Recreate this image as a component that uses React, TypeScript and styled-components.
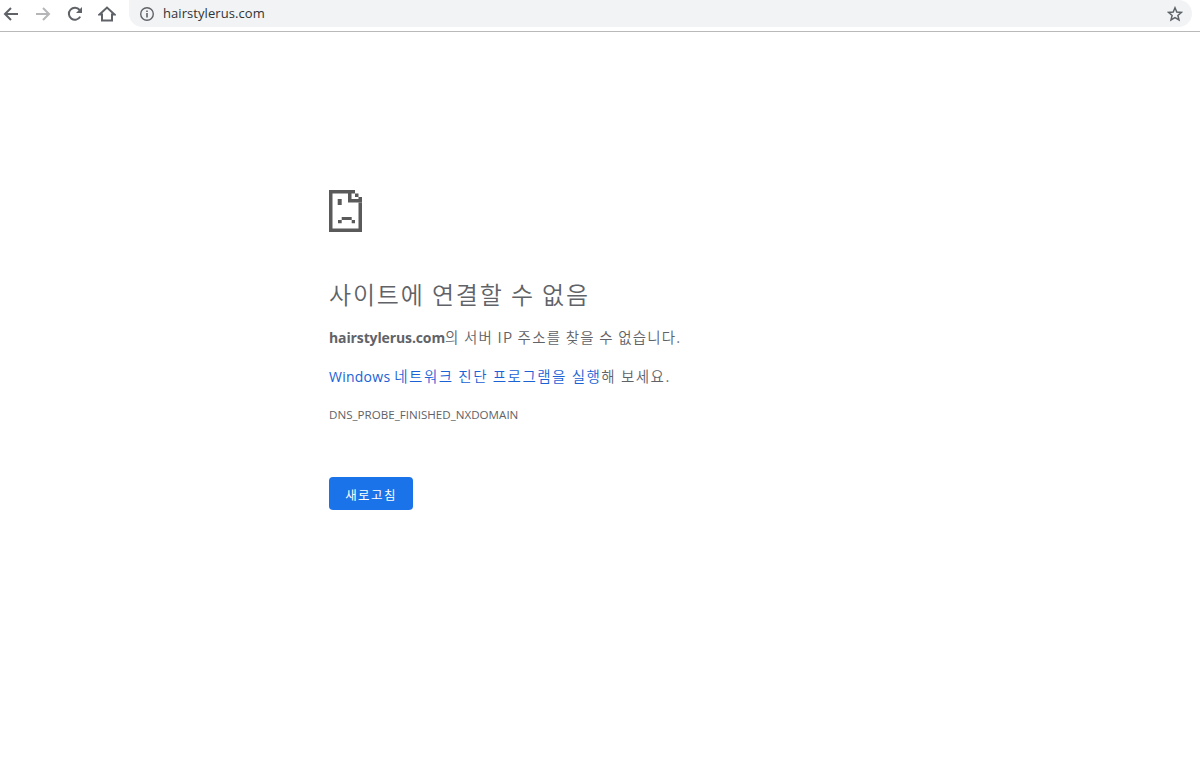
import React from "react";
import styled, { createGlobalStyle } from "styled-components";

const Global = createGlobalStyle`
  html, body { margin: 0; padding: 0; background: #fff; }
  body { font-family: "Open Sans", "Noto Sans CJK KR", sans-serif; }
`;

const Page = styled.div`
  width: 1200px;
  height: 773px;
  overflow: hidden;
  display: flex;
  flex-direction: column;
`;

const Toolbar = styled.header`
  height: 32px;
  flex: none;
  box-sizing: border-box;
  display: flex;
  align-items: flex-start;
  border-bottom: 1px solid #b9b9b9;
  padding-right: 8px;
`;

const NavButton = styled.button<{ $disabled?: boolean }>`
  flex: none;
  width: 32px;
  height: 27px;
  padding: 0;
  border: 0;
  background: none;
  color: ${(p) => (p.$disabled ? "#b4b6b8" : "#5f6368")};
  display: flex;
  align-items: center;
  justify-content: center;
  svg { display: block; }
`;

const NavGroup = styled.nav`
  flex: none;
  width: 129px;
  display: flex;
  margin-left: -5px;
  margin-right: 5px;
`;

const Omnibox = styled.div`
  flex: 1;
  height: 27px;
  background: #f1f3f4;
  border-radius: 0 14px 14px 14px;
  display: flex;
  align-items: center;
  padding: 0 9px 0 10px;
  color: #5f6368;
`;

const Url = styled.span`
  flex: 1;
  margin-left: 8px;
  font-size: 13px;
  letter-spacing: 0.07px;
  color: #303437;
  line-height: 27px;
`;

const Main = styled.main`
  flex: 1;
  padding: 158px 0 0 329px;
  color: #5f6368;
`;

const SadFile = styled.svg`
  display: block;
  width: 33px;
  height: 42px;
  margin-bottom: 44px;
`;

const Title = styled.h1`
  margin: 0 0 15px;
  font-size: 24px;
  font-weight: 350;
  letter-spacing: 1.85px;
  line-height: 36px;
  color: #5f6368;
  font-family: "Noto Sans CJK KR", sans-serif;
`;

const Message = styled.p`
  margin: 0 0 19px;
  height: 20px;
  font-size: 14px;
  line-height: 20px;
  color: #5f6368;
`;

const Strong = styled.strong`
  font-weight: 700;
  letter-spacing: -0.12px;
`;

const Hangul = styled.span<{ $tracking: number }>`
  font-family: "Noto Sans CJK KR", sans-serif;
  font-size: 14.5px;
  font-weight: 350;
  letter-spacing: ${(p) => p.$tracking}px;
`;

const HelpLink = styled.a`
  color: #1a62d6;
  text-decoration: none;
  letter-spacing: 0.25px;
`;

const ErrorCode = styled.div`
  font-size: 11.6px;
  line-height: 18px;
  color: #5f6368;
  margin-top: 20px;
`;

const Reload = styled.button`
  display: block;
  margin-top: 53px;
  width: 84px;
  height: 33px;
  padding: 1px 0 0;
  border: 0;
  border-radius: 4px;
  background: #1a73e8;
  color: #fff;
  font-family: "Noto Sans CJK KR", sans-serif;
  font-size: 12.5px;
  font-weight: 400;
  letter-spacing: 1.4px;
`;

export default function App() {
  return (
    <Page>
      <Global />
      <Toolbar>
        <NavGroup>
          <NavButton aria-label="back">
            <svg width="16" height="16" viewBox="0 0 16 16" fill="none" stroke="#5f6368" strokeWidth="2">
              <path d="M15 8H2M8 2 2 8l6 6" />
            </svg>
          </NavButton>
          <NavButton aria-label="forward" $disabled>
            <svg width="16" height="16" viewBox="0 0 16 16" fill="none" stroke="currentColor" strokeWidth="2">
              <path d="M1 8h13M8 2l6 6-6 6" />
            </svg>
          </NavButton>
          <NavButton aria-label="reload">
            <svg width="16" height="16" viewBox="0 0 16 16" fill="none" stroke="currentColor" strokeWidth="2">
              <path d="M13.2 10.6A6 6 0 1 1 12.6 4" />
              <path d="M15 1v6H9z" fill="currentColor" stroke="none" />
            </svg>
          </NavButton>
          <NavButton aria-label="home">
            <svg width="18" height="18" viewBox="0 0 18 18" fill="none" stroke="currentColor" strokeWidth="2">
              <path d="M1.5 9.5 9 2.5l7.5 7H14v6H4v-6z" />
            </svg>
          </NavButton>
        </NavGroup>
        <Omnibox>
          <svg width="16" height="16" viewBox="0 0 16 16" fill="none" stroke="currentColor" strokeWidth="1.4">
            <circle cx="8" cy="8" r="6.3" />
            <path d="M8 7v4.5M8 4.4v1.6" strokeWidth="1.6" />
          </svg>
          <Url>hairstylerus.com</Url>
          <svg width="16" height="16" viewBox="0 0 16 16" fill="none" stroke="currentColor" strokeWidth="1.5">
            <path d="M8 1.8l1.8 4.2 4.6.4-3.5 3 1.1 4.5L8 11.5l-4 2.4 1.1-4.5-3.5-3 4.6-.4z" />
          </svg>
        </Omnibox>
      </Toolbar>
      <Main>
        <SadFile viewBox="0 0 33 42" fill="#5a5a5a" aria-hidden="true">
          <path d="M0 0h19v3.5H3.5v35h26V12.5H33V42H0z" />
          <path d="M19 0h7v3.5h3.5V7H33v5.5H19zM22.5 3.5V9h7V7H26V3.5z" fillRule="evenodd" />
          <path d="M8.7 9h4v6h-4z" />
          <path d="M12.7 27h10v3h3.3v3.2h-3.3V30h-10v3.2H9V30h3.7z" />
        </SadFile>
        <Title>사이트에 연결할 수 없음</Title>
        <Message>
          <Strong>hairstylerus.com</Strong>
          <Hangul $tracking={1.2}>의 서버 IP 주소를 찾을 수 없습니다.</Hangul>
        </Message>
        <Message>
          <HelpLink href="#">
            Windows <Hangul $tracking={1.5}>네트워크 진단 프로그램을 실행</Hangul>
          </HelpLink>
          <Hangul $tracking={1.5}>해 보세요.</Hangul>
        </Message>
        <ErrorCode>DNS_PROBE_FINISHED_NXDOMAIN</ErrorCode>
        <Reload>새로고침</Reload>
      </Main>
    </Page>
  );
}
